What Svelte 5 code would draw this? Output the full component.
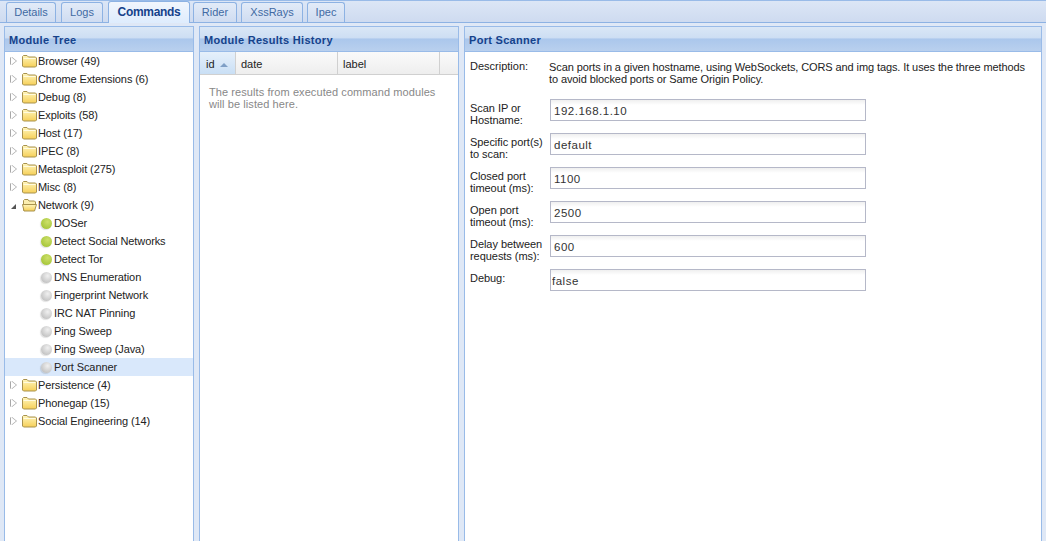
<script lang="ts">
  const tabs = ["Details", "Logs", "Commands", "Rider", "XssRays", "Ipec"];

  const tree = [
    { name: "Browser (49)" },
    { name: "Chrome Extensions (6)" },
    { name: "Debug (8)" },
    { name: "Exploits (58)" },
    { name: "Host (17)" },
    { name: "IPEC (8)" },
    { name: "Metasploit (275)" },
    { name: "Misc (8)" },
    {
      name: "Network (9)",
      open: true,
      children: [
        { name: "DOSer", ok: true },
        { name: "Detect Social Networks", ok: true },
        { name: "Detect Tor", ok: true },
        { name: "DNS Enumeration" },
        { name: "Fingerprint Network" },
        { name: "IRC NAT Pinning" },
        { name: "Ping Sweep" },
        { name: "Ping Sweep (Java)" },
        { name: "Port Scanner", selected: true },
      ],
    },
    { name: "Persistence (4)" },
    { name: "Phonegap (15)" },
    { name: "Social Engineering (14)" },
  ];

  const fields = [
    { label: "Scan IP or Hostname:", value: "192.168.1.10" },
    { label: "Specific port(s) to scan:", value: "default" },
    { label: "Closed port timeout (ms):", value: "1100" },
    { label: "Open port timeout (ms):", value: "2500" },
    { label: "Delay between requests (ms):", value: "600" },
    { label: "Debug:", value: "false", mono: true },
  ];
</script>

{#snippet folder(open)}
  <svg class="folder" width="15" height="14" viewBox="0 0 15 14">
    <defs>
      <linearGradient id={open ? "fo" : "fc"} x1="0" y1="0" x2="0" y2="1">
        <stop offset="0" stop-color="#fff6bd" />
        <stop offset="1" stop-color="#f6cf58" />
      </linearGradient>
    </defs>
    {#if open}
      <path d="M1.500 12.500V2.500l1-1h3.500l1 1.500h5.500l1 1v2" fill="#fbeeb0" stroke="#a8924e" />
      <path d="M.5 6.500h14l-2 6.500h-10.500z" fill="url(#fo)" stroke="#a8924e" stroke-linejoin="round" />
    {:else}
      <path d="M.5 12V2.500l1-1h3.500l1.500 1.500h7l1 1V12l-1 1h-12z" fill="url(#fc)" stroke="#a8924e" stroke-linejoin="round" />
      <path d="M1.500 4.500h12" stroke="#fffbe0" fill="none" />
    {/if}
  </svg>
{/snippet}

<div class="page">
  <div class="tabstrip">
    {#each tabs as tab}
      <div class="tab" class:active={tab === "Commands"}>{tab}</div>
    {/each}
  </div>

  <div class="columns">
    <section class="panel tree-panel">
      <header>Module Tree</header>
      <div class="body tree">
        {#each tree as node}
          <div class="row">
            <span class="arrow" class:open={node.open}></span>
            {@render folder(node.open)}
            <span class="name">{node.name}</span>
          </div>
          {#if node.children}
            {#each node.children as leaf}
              <div class="row leaf" class:selected={leaf.selected}>
                <span class="dot" class:ok={leaf.ok}></span>
                <span class="name">{leaf.name}</span>
              </div>
            {/each}
          {/if}
        {/each}
      </div>
    </section>

    <section class="panel history-panel">
      <header>Module Results History</header>
      <div class="body">
        <div class="grid-head">
          <div class="col id">id <span class="sort"></span></div>
          <div class="col date">date</div>
          <div class="col label">label</div>
          <div class="col rest"></div>
        </div>
        <p class="empty">The results from executed command modules will be listed here.</p>
      </div>
    </section>

    <section class="panel form-panel">
      <header>Port Scanner</header>
      <div class="body form">
        <div class="desc">
          <span class="lbl">Description:</span>
          <p>Scan ports in a given hostname, using WebSockets, CORS and img tags. It uses the three methods to avoid blocked ports or Same Origin Policy.</p>
        </div>
        {#each fields as f}
          <div class="field">
            <span class="lbl">{f.label}</span>
            <input type="text" class:mono={f.mono} value={f.value} />
          </div>
        {/each}
      </div>
    </section>
  </div>
</div>

<style>
  :global(body) {
    margin: 0;
    background: #fff;
  }

  .page {
    height: 541px;
    width: 1046px;
    overflow: hidden;
    display: flex;
    flex-direction: column;
    font-family: "Liberation Sans", Arial, sans-serif;
    font-size: 11px;
    color: #222;
    background: #dfe8f6;
  }

  .tabstrip {
    height: 23px;
    box-sizing: border-box;
    display: flex;
    align-items: flex-end;
    gap: 4px;
    padding: 1px 0 0 6px;
    background: linear-gradient(#dce6f6, #cedbf0);
    border-top: 1px solid #99bbe8;
    border-bottom: 1px solid #8db2e3;
  }

  .tab {
    height: 20px;
    box-sizing: border-box;
    text-align: center;
    line-height: 19px;
    color: #416aa3;
    border: 1px solid #8db2e3;
    border-bottom: none;
    border-radius: 3px 3px 0 0;
    background: linear-gradient(#e2ebf8, #cfdcf1);
  }

  .tab:nth-child(1) { width: 50px; margin-right: 1px; }
  .tab:nth-child(2) { width: 42px; margin-right: 1px; }
  .tab:nth-child(4) { width: 44px; }
  .tab:nth-child(5) { width: 62px; }
  .tab:nth-child(6) { width: 38px; }

  .tab.active {
    width: 82px;
    height: 22px;
    margin-bottom: -1px;
    margin-right: -1px;
    line-height: 20px;
    font-weight: bold;
    font-size: 12px;
    letter-spacing: -0.3px;
    color: #15428b;
    background: linear-gradient(#f1f6fd, #deecfd);
  }

  .columns {
    flex: 1;
    min-height: 0;
    display: flex;
    gap: 5px;
    padding: 3px 4px 0;
  }

  .panel {
    display: flex;
    flex-direction: column;
    min-width: 0;
    box-sizing: border-box;
    border: 1px solid #99bbe8;
    border-bottom: none;
  }

  .tree-panel { width: 190px; }
  .history-panel { width: 260px; }
  .form-panel { width: 578px; }

  header {
    height: 25px;
    box-sizing: border-box;
    padding: 2px 0 0 4px;
    line-height: 22px;
    font-weight: bold;
    font-size: 11px;
    letter-spacing: 0.3px;
    color: #15428b;
    background: linear-gradient(#dae7f6 0, #cddef3 45%, #abc7ec 50%, #b9d0ee 100%);
    border-bottom: 1px solid #99bbe8;
  }

  .body {
    flex: 1;
    background: #fff;
  }

  .row {
    height: 18px;
    display: flex;
    align-items: center;
    white-space: nowrap;
    padding-left: 6px;
    letter-spacing: -0.1px;
  }

  .arrow {
    width: 0;
    height: 0;
    margin-right: 6px;
    border-left: 5px solid #fff;
    border-top: 4px solid transparent;
    border-bottom: 4px solid transparent;
    filter: drop-shadow(-1px 0 0 #a8a8a8) drop-shadow(1px 0 0 #a8a8a8);
  }

  .arrow.open {
    margin: 3px 6px 0 0;
    border: none;
    border-left: 5px solid transparent;
    border-bottom: 5px solid #555;
    filter: none;
  }

  .folder {
    flex: none;
    margin-right: 1px;
  }

  .leaf {
    padding-left: 36px;
  }

  .selected {
    background: #d9e8fb;
  }

  .dot {
    flex: none;
    width: 11px;
    height: 11px;
    margin-right: 2px;
    border-radius: 50%;
    box-shadow: -1px 1px 1px rgba(0, 0, 0, 0.12);
    background: radial-gradient(circle at 60% 35%, #f0f0f0, #c6c6c6 70%, #b0b0b0);
  }

  .dot.ok {
    background: radial-gradient(circle at 60% 35%, #cde06a, #a9c83e 70%, #8fad2e);
  }

  .grid-head {
    height: 23px;
    box-sizing: border-box;
    display: flex;
    background: linear-gradient(#fafafa, #eeeeee);
    border-bottom: 1px solid #d0d0d0;
    line-height: 25px;
  }

  .col {
    box-sizing: border-box;
    padding-left: 5px;
    border-right: 1px solid #d0d0d0;
  }

  .col.id {
    width: 36px;
    padding-left: 6px;
    background: linear-gradient(#e6f0fb, #c9dff5);
  }
  .col.date { width: 102px; }
  .col.label { width: 102px; }
  .col.rest { flex: 1; border-right: none; }

  .sort {
    display: inline-block;
    vertical-align: 1px;
    margin-left: 2px;
    border-left: 4px solid transparent;
    border-right: 4px solid transparent;
    border-bottom: 4px solid #7f9fc6;
  }

  .empty {
    margin: 11px 10px 0 9px;
    line-height: 12px;
    letter-spacing: 0.08px;
    color: #888;
  }

  .form {
    padding: 8px 5px 0;
  }

  .desc {
    display: flex;
    height: 39px;
  }

  .desc p {
    margin: 1px 0 0;
    line-height: 12px;
    width: 486px;
    letter-spacing: -0.1px;
  }

  .lbl {
    flex: none;
    display: block;
    width: 79px;
    line-height: 12px;
    color: #222;
  }

  .field {
    display: flex;
    height: 34px;
    align-items: flex-start;
  }

  .field .lbl {
    width: 80px;
    padding-top: 3px;
    letter-spacing: -0.05px;
  }

  input {
    width: 316px;
    height: 22px;
    box-sizing: border-box;
    padding: 1px 3px 0;
    font: 11.5px "Liberation Sans", sans-serif;
    letter-spacing: 0.5px;
    color: #333;
    border: 1px solid #b5b8c8;
    background: linear-gradient(#efefef, #fff 5px);
    outline: none;
  }

  input.mono {
    padding-left: 1px;
  }
</style>
